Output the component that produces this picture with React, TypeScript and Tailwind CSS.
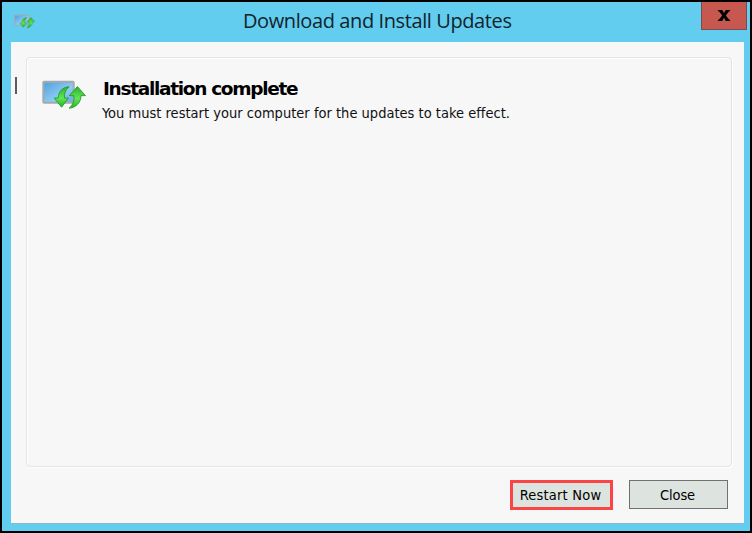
function UpdateIcon({ className }: { className: string }) {
  return (
    <svg className={className} viewBox="0 0 44 30" fill="none">
      <defs>
        <linearGradient id="screen" x1="0" y1="0" x2="1" y2="1">
          <stop offset="0" stopColor="#4f9fdd" />
          <stop offset="0.6" stopColor="#8ccbf3" />
          <stop offset="1" stopColor="#5faae2" />
        </linearGradient>
        <linearGradient id="leaf" x1="0" y1="0" x2="0" y2="1">
          <stop offset="0" stopColor="#2fae32" />
          <stop offset="0.55" stopColor="#5fe656" />
          <stop offset="1" stopColor="#20b526" />
        </linearGradient>
      </defs>
      <rect x="1.3" y="1.7" width="30.4" height="21" rx="0.8" fill="url(#screen)" stroke="#a4aaad" strokeWidth="2" />
      <path d="M27 6.8C20.5 7.2 16.4 11.6 16.2 18h-4L19.6 27.2 26.4 18h-4c-.4-4.6 1.2-8.2 4.6-11.2z" fill="url(#leaf)" stroke="#249b28" strokeWidth="0.9" strokeLinejoin="round" />
      <path d="M35.4 6.6 27.4 15.6h4.4c.8 4.6-.6 9-4.6 12.6 6.6-.6 11.8-5.4 11.8-12.6h4.4z" fill="url(#leaf)" stroke="#249b28" strokeWidth="0.9" strokeLinejoin="round" />
    </svg>
  );
}

export default function App() {
  return (
    <div className="flex h-[533px] w-[752px] flex-col overflow-hidden border-2 border-black bg-[#63cdf0] text-black">
      <header className="flex h-10 shrink-0 items-start">
        <div className="w-[50px] pt-[12px] pl-3">
          <UpdateIcon className="h-[15px] w-[21px]" />
        </div>
        <h1 className="flex-1 pt-[5px] pl-[191px] font-['Open_Sans','Noto_Sans',sans-serif] text-[20px] leading-[28px] tracking-[-0.4px] whitespace-nowrap text-[#10242b]">
          Download and Install Updates
        </h1>
        <button className="mr-[3px] flex h-7 w-[46px] items-center justify-center border border-t-0 border-[#7d4a4e] bg-[#c75850]">
          <svg className="h-[11px] w-3" viewBox="0 0 12 11">
            <path d="M0 0h4.2L6 3.1 7.8 0H12v1.2h-.9L7.8 5.4l3.4 4.4h.8V11H7.7L6 7.7 4.2 11H0V9.8h.8l3.4-4.4L.9 1.2H0z" fill="#000" />
          </svg>
        </button>
      </header>
      <main className="mx-[9px] mr-[6px] flex h-[482px] shrink-0 flex-col border-b border-[#83bdd1] bg-[#f7f7f7] px-[15px] pr-[12px] pt-[15px] font-['DejaVu_Sans_Condensed','DejaVu_Sans',sans-serif]">
        <section className="flex h-[410px] w-[706px] rounded-[4px] border border-[#dce6eb] pt-[22px] pl-[15px] shadow-[inset_1px_1px_0_#fff,1px_1px_0_#fff]">
          <UpdateIcon className="h-[30px] w-11 shrink-0" />
          <div className="ml-4 whitespace-nowrap">
            <h2 className="-mt-[2px] pl-px font-['DejaVu_Sans',sans-serif] text-[18.5px] leading-[22px] font-bold tracking-[-1.3px]">Installation complete</h2>
            <p className="mt-[3px] text-[14.5px] leading-[20px] tracking-[0.01px] text-[#111]">
              You must restart your computer for the updates to take effect.
            </p>
          </div>
        </section>
        <footer className="mt-[13px] flex justify-end gap-4 pr-1">
          <button className="flex h-[30px] w-[103px] items-center justify-center border-[3px] border-[#fb4444] bg-[#dde3de] pt-px pr-[2px] text-[14.5px] tracking-[0.2px] whitespace-nowrap">
            Restart Now
          </button>
          <button className="flex h-[29px] w-[99px] items-center justify-center border border-[#707070] bg-[#dde3de] pt-[3px] pr-[2px] text-[14.5px] tracking-[-0.1px]">
            Close
          </button>
        </footer>
      </main>
      <span className="absolute top-[77px] left-[15px] h-[17px] w-[2px] bg-[#5c5c5c]" />
    </div>
  );
}
